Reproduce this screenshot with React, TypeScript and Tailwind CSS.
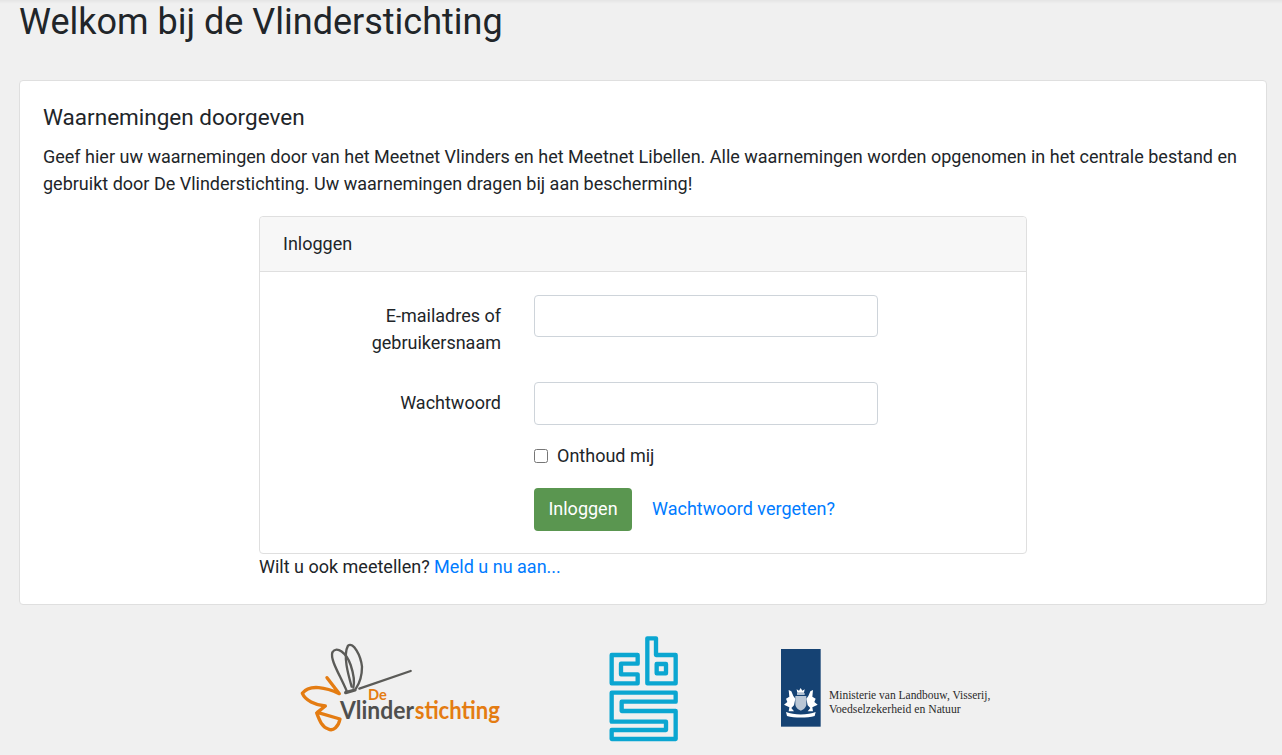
import React from "react";

function VlinderLogo() {
  return (
    <svg viewBox="0 0 720 375" className="w-[240px] h-[125px]" fill="none" strokeLinecap="round" strokeLinejoin="round">
      {/* Wings top */}
      <path d="M200 198 C180 150 150 105 157 82 C170 60 200 85 212 120 C222 150 224 172 220 188" stroke="#5b5b58" strokeWidth="7" />
      <path d="M215 185 C205 150 188 92 204 62 C220 50 242 90 246 125 C246 155 238 175 228 190" stroke="#5b5b58" strokeWidth="7" />
      <path d="M197 203 L225 195" stroke="#5b5b58" strokeWidth="10" />
      <path d="M238 191 L392 138" stroke="#5b5b58" strokeWidth="7" />
      {/* Wings bottom */}
      <path d="M141 158 L178 206 C140 188 88 176 67 205 C76 226 105 240 136 243 L112 262 L180 282 C176 304 160 320 145 312 C125 305 118 285 110 264" stroke="#e47c12" strokeWidth="10" />
      <text x="264" y="226" fontFamily="Lato, sans-serif" fontSize="44" fontWeight="700" fill="#e47c12">De</text>
      <text x="180" y="283" fontFamily="Lato, sans-serif" fontSize="72" fontWeight="700" fill="#4f4f4d" textLength="222" lengthAdjust="spacingAndGlyphs">Vlinder</text>
      <text x="404" y="283" fontFamily="Lato, sans-serif" fontSize="72" fontWeight="700" fill="#e47c12" textLength="256" lengthAdjust="spacingAndGlyphs">stichting</text>
    </svg>
  );
}

function CbsLogo() {
  return (
    <svg viewBox="0 0 330 375" className="w-[110px] h-[125px]" fill="none" stroke="#0ba6d1" strokeWidth="13" strokeLinejoin="round">
      <path d="M143 90 H65 V175 H143 V148 H93 V116 H143 Z" />
      <path d="M172 40 H198 V90 H257 V175 H172 Z" />
      <path d="M200 117 H228 V145 H200 Z" />
      <path d="M65 203 H257 V230 H95 V258 H257 V342 H65 V315 H228 V290 H65 Z" />
    </svg>
  );
}

function MinisterieLogo() {
  return (
    <svg viewBox="0 0 720 285" className="w-[240px] h-[95px]">
      <rect x="33" y="27" width="119" height="233" fill="#154273" />
      {/* Coat of arms */}
      <g fill="#ffffff">
        <path d="M82 158 L80 148 L87 152 L92 144 L97 152 L104 148 L102 158 Z" />
        <rect x="81" y="160" width="23" height="4" />
        <path d="M76 168 H109 V192 C109 204 99 209 92.500 212 C86 209 76 204 76 192 Z" opacity="0.7" />
        <path d="M56 150 L64 154 L70 168 L76 176 L72 196 L64 204 L72 214 L56 214 L58 202 L42 194 L52 186 L48 176 L58 170 Z" />
        <path d="M129 150 L121 154 L115 168 L109 176 L113 196 L121 204 L113 214 L129 214 L127 202 L143 194 L133 186 L137 176 L127 170 Z" />
        <path d="M48 216 C70 226 115 226 137 216 L134 228 C112 234 73 234 51 228 Z" />
      </g>
      <text x="177" y="178" fontFamily="'Liberation Serif', serif" fontSize="36" fill="#2b2b2b" textLength="484" lengthAdjust="spacingAndGlyphs">Ministerie van Landbouw, Visserij,</text>
      <text x="177" y="219" fontFamily="'Liberation Serif', serif" fontSize="36" fill="#2b2b2b" textLength="395" lengthAdjust="spacingAndGlyphs">Voedselzekerheid en Natuur</text>
    </svg>
  );
}

export default function App() {
  return (
    <div className="relative min-h-[755px] overflow-hidden bg-[#f0f0f0] font-['Roboto',sans-serif] text-[18px] leading-[27px] text-[#212529]">
      <div className="absolute inset-x-0 top-0 h-1 bg-gradient-to-b from-black/5 to-transparent" />

      <div className="pl-[19px] pr-[15px]">
        <h1 className="h-[80px] text-[36px] leading-[45px] font-normal">Welkom bij de Vlinderstichting</h1>

        <div className="h-[525px] rounded border border-[#dfdfdf] bg-white px-[23px] pt-[23px]">
          <h5 className="text-[22.5px] leading-[27px] font-normal">Waarnemingen doorgeven</h5>
          <p className="mt-[12px]">
            Geef hier uw waarnemingen door van het Meetnet Vlinders en het Meetnet Libellen. Alle waarnemingen worden opgenomen in het centrale bestand en gebruikt door De Vlinderstichting. Uw waarnemingen dragen bij aan bescherming!
          </p>

          <div className="mx-auto mt-[19px] w-[768px]">
            <div className="h-[338px] rounded border border-[#dfdfdf]">
              <div className="h-[55px] rounded-t border-b border-[#dfdfdf] bg-[#f7f7f7] px-[23px] pt-[13px]">Inloggen</div>
              <form className="flex flex-col pt-[23px]">
                <div className="flex gap-[33px]">
                  <label className="w-[241px] pt-[7px] text-right">E-mailadres of gebruikersnaam</label>
                  <input type="text" className="h-[42px] w-[344px] rounded border border-[#ced4da] bg-white" />
                </div>
                <div className="mt-[26px] flex gap-[33px]">
                  <label className="w-[241px] pt-[7px] text-right">Wachtwoord</label>
                  <input type="password" className="h-[43px] w-[344px] rounded border border-[#ced4da] bg-white" />
                </div>
                <div className="mt-[17px] ml-[274px] flex items-center gap-[9px]">
                  <input type="checkbox" className="h-[14px] w-[14px]" />
                  <label>Onthoud mij</label>
                </div>
                <div className="mt-[19px] ml-[274px] flex items-center gap-[20px]">
                  <button type="button" className="h-[43px] w-[98px] rounded bg-[#5a9650] pb-[2px] text-center text-white">Inloggen</button>
                  <a href="#" className="pb-[2px] text-[#007bff]">Wachtwoord vergeten?</a>
                </div>
              </form>
            </div>
            <div className="-mt-px">
              Wilt u ook meetellen? <a href="#" className="text-[#007bff]">Meld u nu aan...</a>
            </div>
          </div>
        </div>
      </div>

      <div className="mt-[20px] ml-[280px] flex items-start">
        <VlinderLogo />
        <div className="ml-[70px]"><CbsLogo /></div>
        <div className="ml-[70px] mt-[15px]"><MinisterieLogo /></div>
      </div>
    </div>
  );
}
